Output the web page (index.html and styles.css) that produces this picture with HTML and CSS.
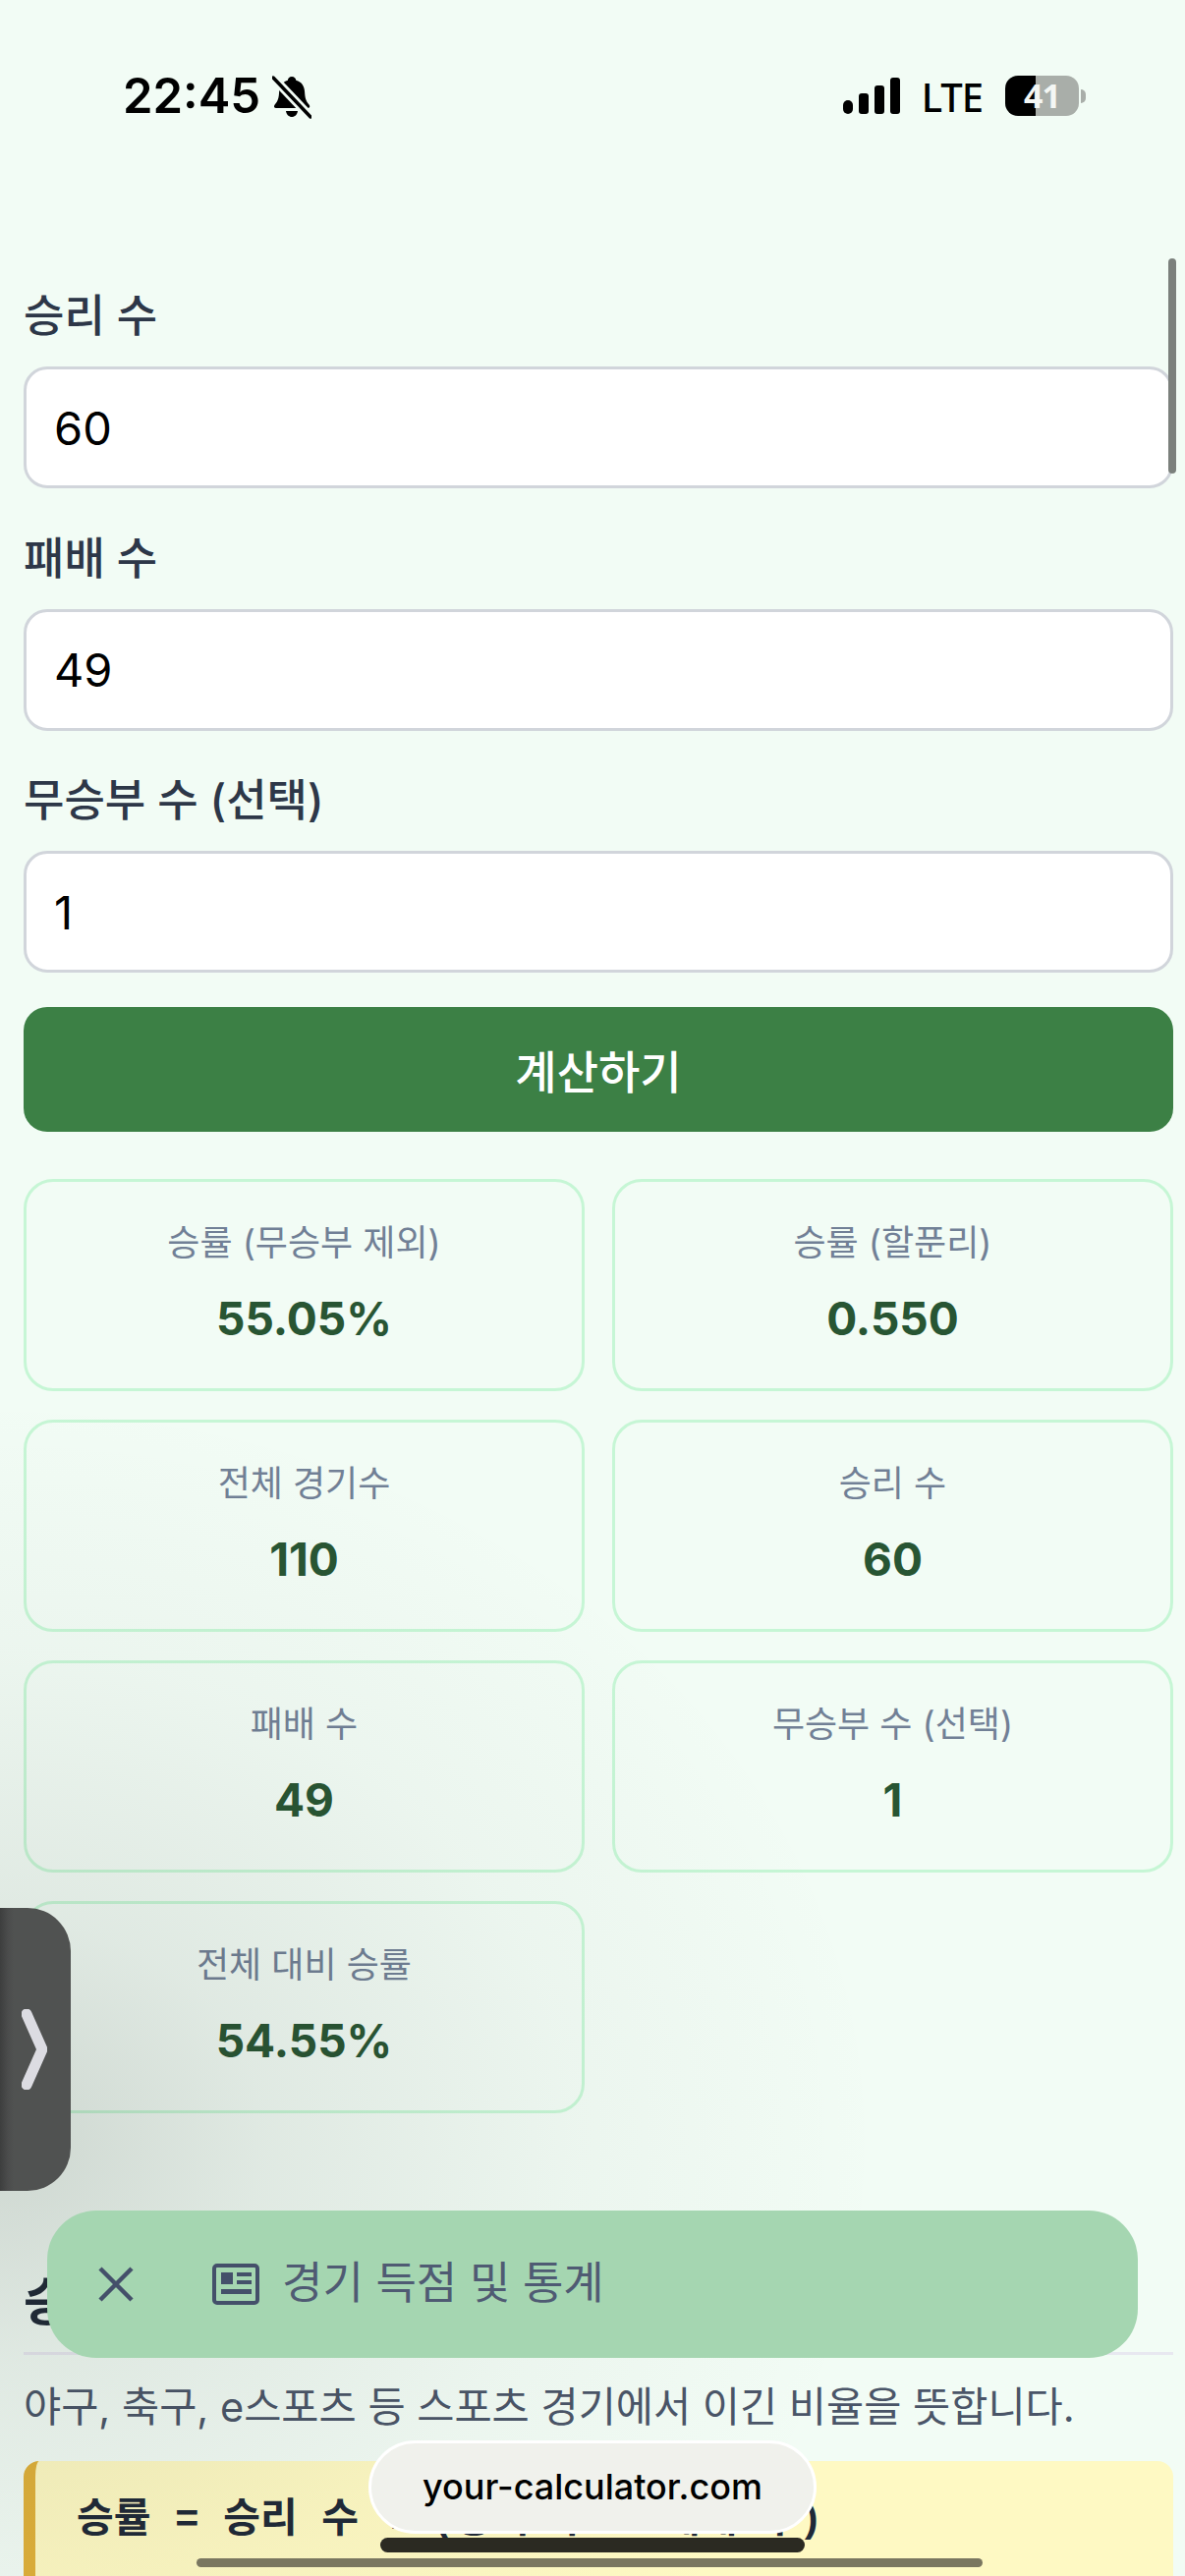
FILE: index.html
```html
<!DOCTYPE html>
<html lang="ko">
<head>
  <meta charset="UTF-8" />
  <meta name="viewport" content="width=device-width, initial-scale=1.0"/>
  <title>승률 계산기</title>
  <link rel="stylesheet" href="styles.css">
</head>
<body>
  <div class="status-bar">
    <div class="status-left">
      <span class="clock">22:45</span>
      <svg class="bell" viewBox="0 0 40 44" aria-hidden="true">
        <path d="M20 1c2.600 0 4 1.800 4.300 3.800 5.700 1.500 8.500 6 8.800 12 .3 6 1.200 9 4.600 13 1.200 1.500.4 3.200-1.500 3.200H4c-1.900 0-2.700-1.700-1.500-3.200 3.400-4 4.300-7 4.600-13 .3-6 3.100-10.500 8.800-12C16 2.800 17.400 1 20 1z"/>
        <path d="M14 36h12c-.5 3.800-3 6-6 6s-5.500-2.200-6-6z"/>
        <path class="bell-gap" d="M2 3l36 38"/>
        <path class="bell-slash" d="M1 2l38 40"/>
      </svg>
    </div>
    <div class="status-right">
      <div class="signal">
        <span class="signal-bar bar-1"></span>
        <span class="signal-bar bar-2"></span>
        <span class="signal-bar bar-3"></span>
        <span class="signal-bar bar-4"></span>
      </div>
      <span class="network">LTE</span>
      <div class="battery">
        <div class="battery-body"><span class="battery-level">41</span></div>
        <span class="battery-nub"></span>
      </div>
    </div>
  </div>

  <main class="content">
    <form class="calc-form">
      <div class="field">
        <label for="wins">승리 수</label>
        <input id="wins" type="number" value="60" />
      </div>
      <div class="field">
        <label for="losses">패배 수</label>
        <input id="losses" type="number" value="49" />
      </div>
      <div class="field">
        <label for="draws">무승부 수 (선택)</label>
        <input id="draws" type="number" value="1" />
      </div>
      <button class="calc-btn" type="button">계산하기</button>
    </form>

    <section class="results">
      <div class="result-card">
        <div class="result-label">승률 (무승부 제외)</div>
        <div class="result-value">55.05%</div>
      </div>
      <div class="result-card">
        <div class="result-label">승률 (할푼리)</div>
        <div class="result-value">0.550</div>
      </div>
      <div class="result-card">
        <div class="result-label">전체 경기수</div>
        <div class="result-value">110</div>
      </div>
      <div class="result-card">
        <div class="result-label">승리 수</div>
        <div class="result-value">60</div>
      </div>
      <div class="result-card">
        <div class="result-label">패배 수</div>
        <div class="result-value">49</div>
      </div>
      <div class="result-card">
        <div class="result-label">무승부 수 (선택)</div>
        <div class="result-value">1</div>
      </div>
      <div class="result-card">
        <div class="result-label">전체 대비 승률</div>
        <div class="result-value">54.55%</div>
      </div>
    </section>

    <article class="explain">
      <h2>승률이란?</h2>
      <p>야구, 축구, e스포츠 등 스포츠 경기에서 이긴 비율을 뜻합니다.</p>
      <div class="formula">승률 = 승리 수 ÷ (승리 수 + 패배 수)</div>
    </article>
  </main>

  <!-- things floating over the page -->
  <div class="side-shade"></div>
  <div class="scroll-thumb"></div>

  <div class="side-handle">
    <svg viewBox="0 0 26 82" aria-hidden="true"><path d="M5 5l16 36L5 77"/></svg>
  </div>

  <div class="promo">
    <svg class="promo-close" viewBox="0 0 36 36" aria-hidden="true"><path d="M2 2l32 32M34 2L2 34"/></svg>
    <svg class="promo-icon" viewBox="0 0 48 42" aria-hidden="true">
      <rect class="paper" x="2" y="2" width="44" height="38" rx="3"/>
      <rect class="paper-fill" x="9" y="9" width="12" height="12"/>
      <rect class="paper-fill" x="25" y="9" width="15" height="4"/>
      <rect class="paper-fill" x="25" y="17" width="15" height="4"/>
      <rect class="paper-fill" x="9" y="26" width="31" height="5"/>
    </svg>
    <span class="promo-text">경기 득점 및 통계</span>
  </div>

  <div class="url-pill">your-calculator.com</div>
  <div class="url-bar"></div>
  <div class="home-bar"></div>
</body>
</html>
```

FILE: styles.css
```css
* {
  box-sizing: border-box;
}

html, body {
  margin: 0;
  height: 2622px;
  overflow: hidden;
}

body {
  position: relative;
  font-family: Inter, 'Noto Sans CJK KR', sans-serif;
  background-color: #f2fcf5;
  color: #1f2937;
}

/* status bar */
.status-bar {
  display: flex;
  justify-content: space-between;
  height: 291px;
  padding: 77px 101px 0 125px;
}

.status-left {
  display: flex;
  align-items: flex-start;
  gap: 12px;
}

.clock {
  font-size: 49px;
  font-weight: 600;
  line-height: 42px;
  color: #000;
}

.bell {
  width: 40px;
  height: 44px;
  fill: #000;
}

.bell-gap {
  fill: none;
  stroke: #f2fcf5;
  stroke-width: 9;
}

.bell-slash {
  fill: none;
  stroke: #000;
  stroke-width: 3.500;
  stroke-linecap: round;
}

.status-right {
  display: flex;
  align-items: flex-start;
}

.signal {
  display: flex;
  align-items: flex-end;
  gap: 6px;
  height: 37px;
  margin-top: 2px;
}

.signal-bar {
  width: 10px;
  background: #000;
  border-radius: 3px;
}

.bar-1 { height: 14px; border-radius: 5px; }
.bar-2 { height: 21px; }
.bar-3 { height: 29px; }
.bar-4 { height: 37px; }

.network {
  margin: 4px 23px 0 22px;
  font-family: 'Noto Sans', sans-serif;
  font-size: 40px;
  font-weight: 500;
  line-height: 36px;
  letter-spacing: -1px;
  color: #000;
}

.battery {
  display: flex;
  align-items: center;
}

.battery-body {
  width: 75px;
  height: 41px;
  border-radius: 13px;
  background: linear-gradient(90deg, #000 41%, #a9aea9 41%);
  text-align: center;
}

.battery-level {
  font-family: 'Open Sans', sans-serif;
  font-size: 34px;
  font-weight: 700;
  line-height: 41px;
  letter-spacing: -1px;
  color: #f4f7f4;
}

.battery-nub {
  width: 5px;
  height: 14px;
  margin-left: 2px;
  background: #a9aea9;
  border-radius: 0 7px 7px 0;
}

/* calculator */
.content {
  padding: 0 12px 0 24px;
}

.field {
  display: flex;
  flex-direction: column;
}

.field + .field {
  margin-top: 40.500px;
}

.field label {
  margin-bottom: 20px;
  font-size: 45px;
  font-weight: 500;
  line-height: 62px;
  color: #2d3748;
}

.field input {
  width: 100%;
  height: 124px;
  padding: 0 28px;
  border: 3px solid #d1d5db;
  border-radius: 24px;
  background: #fff;
  font-family: inherit;
  font-size: 47px;
  color: #000;
  outline: none;
}

.calc-btn {
  display: block;
  width: 100%;
  height: 127px;
  margin-top: 35px;
  padding-bottom: 3px;
  border: none;
  border-radius: 24px;
  background-color: #3c8045;
  font-family: inherit;
  font-size: 46px;
  font-weight: 500;
  color: #fff;
}

.results {
  display: grid;
  grid-template-columns: 1fr 1fr;
  gap: 29px 28px;
  margin-top: 48px;
}

.result-card {
  height: 216px;
  padding: 35px 12px 0;
  border: 3px solid #c6f6d5;
  border-radius: 30px;
  text-align: center;
}

.result-label {
  font-size: 36px;
  line-height: 54px;
  color: #718096;
}

.result-value {
  margin-top: 20px;
  font-size: 46px;
  font-weight: 700;
  line-height: 60px;
  color: #285533;
}

/* explanation below the results */
.explain {
  margin-top: 158px;
}

.explain h2 {
  margin: 0;
  padding-bottom: 15px;
  border-bottom: 3px solid #e8e8f0;
  font-size: 52px;
  line-height: 70px;
  color: #1f2937;
}

.explain p {
  margin: 22px 0 0;
  font-size: 41.500px;
  line-height: 62px;
  color: #4a5568;
}

.formula {
  height: 200px;
  margin-top: 24px;
  padding: 31px 20px 0 42px;
  border-left: 12px solid #e0b13a;
  border-radius: 16px;
  background: #fef9c3;
  font-family: 'Liberation Mono', 'Noto Sans CJK KR', monospace;
  font-size: 41px;
  font-weight: 700;
  line-height: 60px;
  color: #1f2937;
}

/* overlays */
.side-shade {
  position: absolute;
  left: 0;
  top: 1400px;
  width: 1100px;
  height: 1222px;
  background: radial-gradient(ellipse 900px 760px at 0 780px, rgba(40, 45, 40, 0.18) 0, rgba(40, 45, 40, 0.09) 30%, rgba(40, 45, 40, 0.03) 65%, rgba(40, 45, 40, 0) 100%);
  pointer-events: none;
}

.scroll-thumb {
  position: absolute;
  left: 1189px;
  top: 263px;
  width: 8px;
  height: 219px;
  border-radius: 4px;
  background: #7b807c;
}

.side-handle {
  position: absolute;
  left: 0;
  top: 1942px;
  display: flex;
  align-items: center;
  width: 72px;
  height: 288px;
  padding-left: 22px;
  border-radius: 0 44px 44px 0;
  background: linear-gradient(90deg, #3d3e3e 0, #4b4c4c 8px, #505251 14px);
}

.side-handle svg {
  width: 26px;
  height: 82px;
  fill: none;
  stroke: #dcdce2;
  stroke-width: 11;
  stroke-linecap: round;
  stroke-linejoin: round;
}

.promo {
  position: absolute;
  left: 48px;
  top: 2250px;
  display: flex;
  align-items: center;
  width: 1110px;
  height: 150px;
  padding-left: 52px;
  border-radius: 50px;
  background: #a5d6b1;
}

.promo-close {
  width: 36px;
  height: 36px;
  fill: none;
  stroke: #44506a;
  stroke-width: 4.500;
}

.promo-icon {
  width: 48px;
  height: 42px;
  margin-left: 80px;
}

.paper {
  fill: none;
  stroke: #44506a;
  stroke-width: 4;
}

.paper-fill {
  fill: #44506a;
}

.promo-text {
  margin: -9px 0 0 23px;
  font-size: 45px;
  color: #4f5b73;
}

.url-pill {
  position: absolute;
  left: 375px;
  top: 2484px;
  width: 456px;
  height: 95px;
  border: 3px solid #fff;
  border-radius: 48px;
  background: #f0f1ec;
  font-size: 36px;
  font-weight: 500;
  line-height: 89px;
  text-align: center;
  color: #000;
}

.url-bar {
  position: absolute;
  left: 387px;
  top: 2583px;
  width: 432px;
  height: 15px;
  border-radius: 8px;
  background: #2b2a22;
}

.home-bar {
  position: absolute;
  left: 200px;
  top: 2604px;
  width: 800px;
  height: 9px;
  border-radius: 5px;
  background: #7a7760;
}
```
